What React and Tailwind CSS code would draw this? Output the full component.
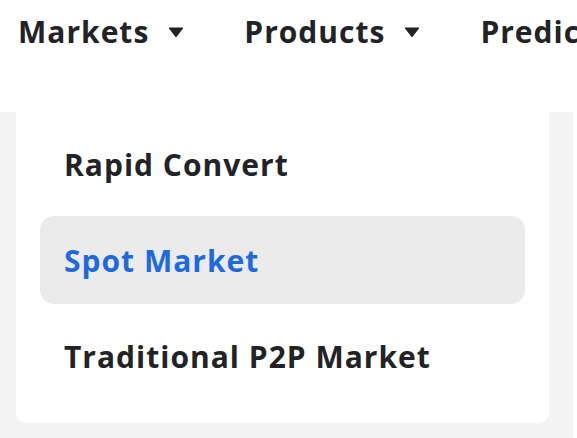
import React from 'react'

const Caret = () => (
  <svg width="16" height="11" viewBox="0 0 16 11" className="ml-[19px]">
    <path d="M1 1.5 Q0.5 0.5 1.8 0.5 H14.2 Q15.5 0.5 15 1.5 L8.8 9.6 Q8 10.6 7.2 9.6 Z" fill="#222326" />
  </svg>
)

const items = [
  { label: 'Rapid Convert' },
  { label: 'Spot Market', active: true },
  { label: 'Traditional P2P Market' },
]

export default function App() {
  return (
    <div className="w-[577px] h-[438px] overflow-hidden bg-white font-['Open_Sans',sans-serif] font-bold text-[#222326] tracking-[1px]">
      {/* Top nav */}
      <nav className="h-[112px] flex items-start pt-[10px] pl-[18px] gap-[60px] whitespace-nowrap text-[30px] leading-[44px]">
        <div className="flex items-center">
          Markets
          <Caret />
        </div>
        <div className="flex items-center">
          Products
          <Caret />
        </div>
        <div>Predictions</div>
      </nav>

      {/* Dropdown area */}
      <div className="w-[573px] h-[326px] bg-[#f4f4f4] px-[16px]">
        <div className="w-[533px] bg-white rounded-b-[10px] pt-[8px] pb-[23px] px-[24px] flex flex-col gap-[8px]">
          {items.map((it) => (
            <div
              key={it.label}
              className={`h-[88px] rounded-[14px] flex items-center px-[24px] text-[30px] ${
                it.active ? 'bg-[#ebebeb] text-[#1d6ae0]' : ''
              }`}
            >
              {it.label}
            </div>
          ))}
        </div>
      </div>
    </div>
  )
}
